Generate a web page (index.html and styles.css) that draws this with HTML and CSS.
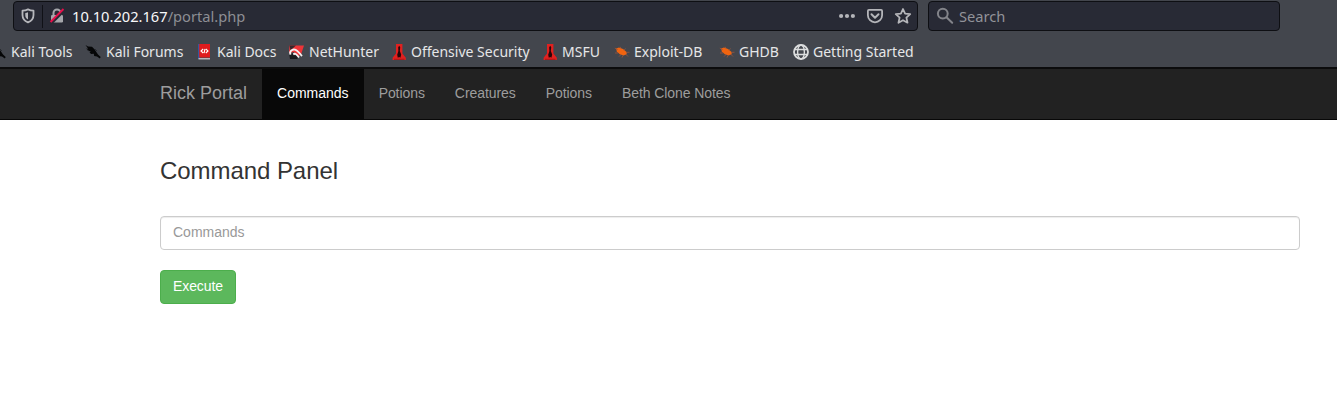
FILE: index.html
```html
<!DOCTYPE html>
<html lang="en">
<head>
<meta charset="utf-8">
<title>Rick Portal</title>
<link rel="stylesheet" href="styles.css">
</head>
<body>
<svg class="defs" width="0" height="0" aria-hidden="true">
  <symbol id="dragon" viewBox="0 0 16 16"><path d="M.5 1 3 2.5 7 2.8 9.5 5.2 11.5 8.2 13 10.5 15.7 13 14.8 14.5 12 12.6 9.2 12 8.8 9.8 6.2 10 4.5 8.6 5.8 7.7 3.2 6.5 1.2 4.5 3.2 4.7z" fill="#050607"/><path d="M2 5.5 4 7M10 5 12 7" stroke="#202226" stroke-width=".7"/></symbol>
  <symbol id="tower" viewBox="0 0 16 16"><path d="M5 0h6.4v9.5l3.4 4.2V16H1.6v-2.3L5 9.5z" fill="#e1201f"/><path d="M8.2 1.8 9.2 3.2 8.8 7 10.2 10.5 9.4 13.8 8.2 13 6.8 13.8 6.2 10.8 7.4 7 7.2 3.2z" fill="#250709"/><path d="M3 15.3h10.5" stroke="#a51618" stroke-width="1"/></symbol>
  <symbol id="bug" viewBox="0 0 16 16"><path d="M2.2 4.6 5 3.5 9 5 12.3 7.8 12.8 10.3 9.5 11.4 5.8 10.2 2.8 7.4z" fill="#f06410"/><path d="M.8 4.1 4 5.8M7 4.7 6.2 2.8M10 6.3 11.5 4.5M12 8.5 15.5 8.2M12 10.5 14 12.5M7 10.5 5 12.6M4 9 1 9M9 11.5 8 13.6" stroke="#a9583a" stroke-width=".7" fill="none"/></symbol>
</svg>
<header class="browser">
  <div class="toolbar">
    <div class="address">
      <svg class="shield" width="14" height="16" viewBox="0 0 14 16"><path d="M7 1.4C5 2.4 3 2.7 1.5 2.7V7c0 3.6 2 6 5.5 7.4 3.5-1.4 5.5-3.8 5.5-7.4V2.7C11 2.7 9 2.4 7 1.4z" fill="none" stroke="#b6b7bc" stroke-width="1.8" stroke-linejoin="round"/><path d="M7 4.3c-1 .5-1.8.6-2.7.7v2.2c0 2 .9 3.4 2.7 4.4z" fill="#b6b7bc"/></svg>
      <span class="divider"></span>
      <svg class="lock" width="16" height="16" viewBox="0 0 16 16"><path d="M4.5 8V5a3.5 3.5 0 0 1 7 0v3" fill="none" stroke="#a5a6ab" stroke-width="2"/><rect x="2" y="7" width="12" height="7.5" rx="1.2" fill="#a5a6ab"/><path d="m2.7 15.2 13-13" stroke="#282a35" stroke-width="2.4"/><path d="m1.5 14 13-13" stroke="#e5104b" stroke-width="1.9"/></svg>
      <span class="url">10.10.202.167<span class="path">/portal.php</span></span>
      <span class="actions">
        <svg width="18" height="16" viewBox="0 0 18 16" fill="#b4b5b9"><circle cx="3.1" cy="8" r="2.1"/><circle cx="9" cy="8" r="2.1"/><circle cx="14.9" cy="8" r="2.1"/></svg>
        <svg width="18" height="16" viewBox="0 0 18 16" fill="none" stroke="#b4b5b9" stroke-width="1.8" stroke-linecap="round" stroke-linejoin="round"><path d="M2.9 1.9h12.2q1 0 1 1V7.2a7.1 7.1 0 0 1-14.2 0V2.9q0-1 1-1z"/><path d="M5.5 6.3 9 9.7l3.5-3.4" stroke-width="2"/></svg>
        <svg width="18" height="16" viewBox="0 0 18 16"><path d="m9 1 2.1 4.6 5.1.6-3.8 3.4 1.1 5.1L9 12.2l-4.5 2.5 1.1-5.1-3.8-3.4 5.1-.6z" fill="none" stroke="#b4b5b9" stroke-width="1.8" stroke-linejoin="round"/></svg>
      </span>
    </div>
    <div class="search"><svg width="18" height="18" viewBox="0 0 18 18" fill="none" stroke="#83848a" stroke-width="2" stroke-linecap="round"><circle cx="6.8" cy="6.6" r="4.9"/><path d="m10.5 10.3 5.7 5.5"/></svg><span>Search</span></div>
  </div>
  <nav class="bookmarks">
    <a><svg><use href="#dragon"/></svg><span>Kali Tools</span></a>
    <a><svg><use href="#dragon"/></svg><span>Kali Forums</span></a>
    <a><svg viewBox="0 0 16 16"><path d="M2 0h2v15H2z" fill="#35579c"/><path d="M3.2 0H14v13.5H3.2z" fill="#e01b1e"/><path d="M2.5 14h11.5v1.5H2.5z" fill="#b7b5bc"/><path d="M7.2 5 5 7l2.2 2M9.8 4.8 12 7 9.8 9M9 5 8 9.2" fill="none" stroke="#fff" stroke-width="1.1"/></svg><span>Kali Docs</span></a>
    <a><svg viewBox="0 0 16 16"><path d="M1.5 1.5H16L13.2 10 9.5 13 6 8 1 9z" fill="#ee3438"/><path d="M1.5 1.5H8L2.5 6.2z" fill="#35272b"/><path d="M1 9h5l5 4-2 2H2z" fill="#191a1d"/><path d="M2.6 10.6C1 7.6 4.2 4.8 7 5.6c2.6.7 4 3 7 6.4M5.3 10.5c1.6-1.6 2.8-.8 5.7 3" fill="none" stroke="#f4f1f1" stroke-width="1.9"/></svg><span>NetHunter</span></a>
    <a><svg><use href="#tower"/></svg><span>Offensive Security</span></a>
    <a><svg><use href="#tower"/></svg><span>MSFU</span></a>
    <a><svg><use href="#bug"/></svg><span>Exploit-DB</span></a>
    <a><svg><use href="#bug"/></svg><span>GHDB</span></a>
    <a><svg viewBox="0 0 16 16" fill="none" stroke="#dcddde" stroke-width="1.4"><circle cx="8" cy="8" r="7" stroke-width="1.8"/><ellipse cx="8" cy="8" rx="3.4" ry="7"/><path d="M1.5 5.5h13M1.5 10.5h13"/></svg><span>Getting Started</span></a>
  </nav>
</header>
<nav class="navbar">
  <a class="brand">Rick Portal</a>
  <a class="tab active">Commands</a><a class="tab">Potions</a><a class="tab">Creatures</a><a class="tab">Potions</a><a class="tab">Beth Clone Notes</a>
</nav>
<main class="panel">
  <h3>Command Panel</h3>
  <input class="command" type="text" placeholder="Commands">
  <button class="execute" type="button">Execute</button>
</main>
</body>
</html>
```
FILE: styles.css
```css
* { box-sizing: border-box; }
body {
  margin: 0;
  height: 408px;
  overflow: hidden;
  background: #fff;
  color: #333;
  font: 14px/20px "Liberation Sans", Arial, sans-serif;
}
svg { display: block; flex: none; }
.defs { position: absolute; }
.browser {
  height: 69px;
  padding-top: 1px;
  overflow: hidden;
  background: #43464d;
  border-bottom: 2px solid #0c0c0d;
  font-family: "Noto Sans", sans-serif;
}
.toolbar { display: flex; gap: 10px; padding-left: 13px; }
.address, .search {
  display: flex;
  align-items: center;
  height: 30px;
  background: #282a35;
  border: 1px solid #0e0f13;
  border-radius: 4px;
}
.address { width: 905px; padding-left: 7px; font-size: 14.67px; }
.divider { width: 1px; height: 23px; margin: 0 6px 0 7px; background: #101117; }
.url { margin-left: 7px; color: #f8f8f9; white-space: nowrap; }
.path { color: #8d8e94; }
.actions { display: flex; gap: 10px; margin-left: auto; padding-right: 5px; }
.search { width: 352px; padding-left: 7px; gap: 5px; color: #929399; font-size: 14.67px; }
.bookmarks {
  display: grid;
  grid-template-columns: 95px 111px 92px 103px 151px 72px 105px 74px 130px;
  align-items: center;
  height: 36px;
  margin: 3px 0 0 -10px;
  color: #e6e7e8;
  font-size: 14px;
  white-space: nowrap;
}
.bookmarks a { display: flex; align-items: center; gap: 5px; }
.bookmarks a:nth-child(n+5) { gap: 4px; }
.bookmarks svg { width: 16px; height: 16px; }
.navbar {
  display: flex;
  height: 51px;
  padding-left: 160px;
  background: #222;
  border-bottom: 1px solid #080808;
  color: #9d9d9d;
}
.brand { padding: 14px 15px 16px 0; font-size: 18px; }
.tab { padding: 14px 15px 16px; }
.tab:not(.active) { letter-spacing: -.07px; }
.active { background: #080808; color: #fff; }
.panel { width: 1140px; margin-left: 160px; padding-top: 38px; }
h3 { margin: 0 0 32px; font-size: 24px; font-weight: 400; line-height: 26px; letter-spacing: -.06px; }
.command {
  display: block;
  width: 100%;
  height: 34px;
  margin: 0 0 20px;
  padding: 5px 12px 7px;
  border: 1px solid #ccc;
  border-radius: 4px;
  box-shadow: inset 0 1px 1px rgba(0, 0, 0, .075);
  font: inherit;
}
.command::placeholder { color: #999; opacity: 1; }
.execute {
  display: block;
  width: 76px;
  height: 34px;
  padding: 5px 0 7px;
  border: 1px solid #4cae4c;
  border-radius: 4px;
  background: #5cb85c;
  color: #fff;
  font: inherit;
  letter-spacing: -.07px;
}
```
